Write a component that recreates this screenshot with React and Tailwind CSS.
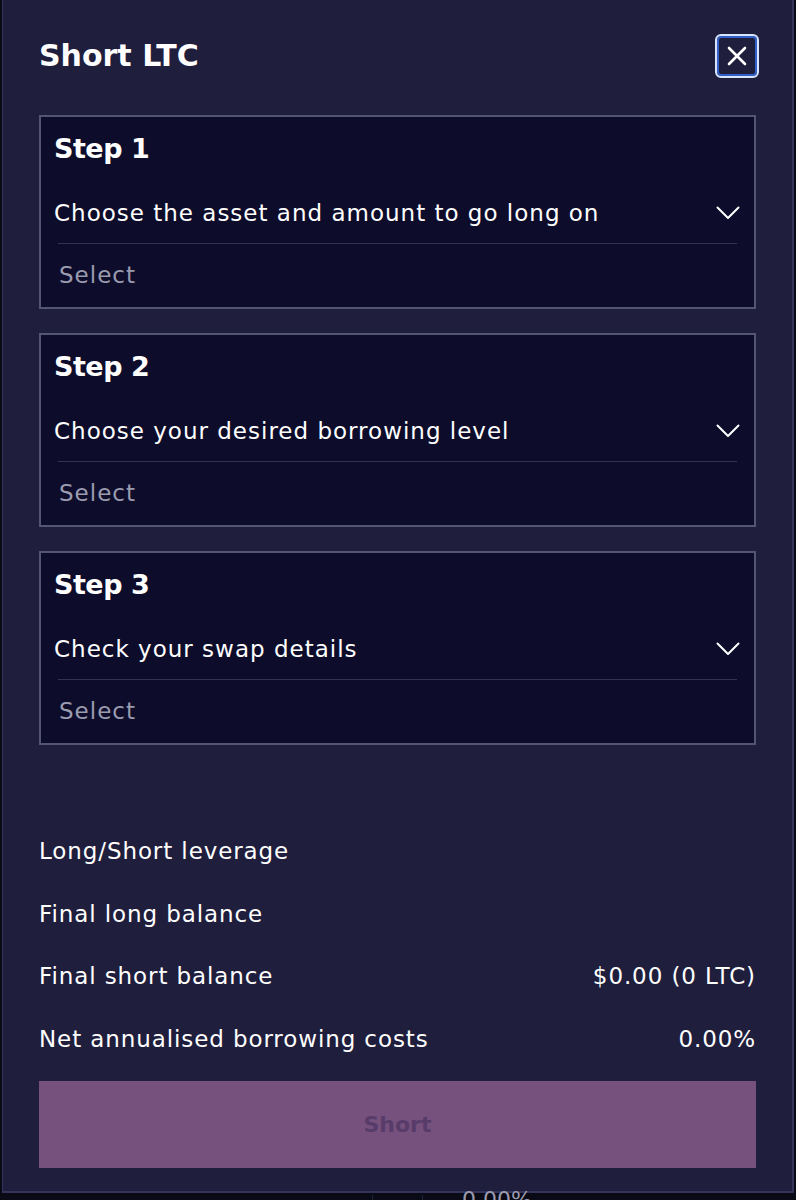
import React from 'react';

const font = { fontFamily: '"DejaVu Sans", "Open Sans", sans-serif' };

function Chevron() {
  return (
    <svg width="24" height="14" viewBox="0 0 24 14" fill="none" stroke="white" strokeWidth="2" strokeLinecap="round" strokeLinejoin="round">
      <path d="M1.5 1.5 L12 12 L22.5 1.5" />
    </svg>
  );
}

function StepCard({ step, label }) {
  return (
    <div className="border-2 border-[#545475] bg-[#0d0d2b] px-[13px] pt-[13px] pb-[17px]">
      <div className="text-[27px] font-bold text-white leading-[38px] tracking-[-0.5px]">{step}</div>
      <div className="flex items-center justify-between mt-[30px] pr-[1px]">
        <span className="text-[23px] text-white leading-[30px] tracking-[1px]">{label}</span>
        <Chevron />
      </div>
      <div className="mx-[4px] mt-[15px] h-px bg-[#33334f]" />
      <div className="px-[5px] mt-[16px] text-[23px] text-[#9b9bb0] leading-[30px] tracking-[1px]">Select</div>
    </div>
  );
}

function Row({ label, value }) {
  return (
    <div className="flex items-center justify-between h-[62.5px] text-[23px] text-white tracking-[0.9px]">
      <span>{label}</span>
      <span>{value}</span>
    </div>
  );
}

export default function App() {
  return (
    <div className="w-[796px] h-[1200px] bg-[#0a0a16] overflow-hidden relative" style={font}>
      <div className="mx-[2px] h-[1193px] bg-[#1f1e3d] border-r-2 border-b-2 border-l border-[#34345a] px-[36px] pt-[34px]">
        <div className="flex items-center justify-between">
          <h2 className="text-[30px] font-bold text-white leading-[44px]">Short LTC</h2>
          <button className="w-[44px] h-[44px] rounded-[6px] border-2 border-[#d8e4ff] ring-2 ring-inset ring-[#2f5fc7] bg-[#1f1e3d] flex items-center justify-center -mr-[3px]">
            <svg width="22" height="22" viewBox="0 0 22 22" stroke="white" strokeWidth="2.6" strokeLinecap="round">
              <path d="M3 3 L19 19 M19 3 L3 19" />
            </svg>
          </button>
        </div>

        <div className="flex flex-col gap-[24px] mt-[37px]">
          <StepCard step="Step 1" label="Choose the asset and amount to go long on" />
          <StepCard step="Step 2" label="Choose your desired borrowing level" />
          <StepCard step="Step 3" label="Check your swap details" />
        </div>

        <div className="mt-[75px]">
          <Row label="Long/Short leverage" value="" />
          <Row label="Final long balance" value="" />
          <Row label="Final short balance" value="$0.00 (0 LTC)" />
          <Row label="Net annualised borrowing costs" value="0.00%" />
        </div>

        <button className="mt-[11px] w-full h-[87px] bg-[#76517e] text-[22px] font-bold text-[#573c69]">
          Short
        </button>
      </div>

      <div className="absolute left-[372px] top-[1195px] w-px h-[5px] bg-[#22223a]" />
      <div className="absolute left-[422px] top-[1195px] w-px h-[5px] bg-[#22223a]" />
      <div className="absolute left-[462px] top-[1185px] text-[22px] text-[#9a9aae] leading-[30px]">0.00%</div>
    </div>
  );
}
